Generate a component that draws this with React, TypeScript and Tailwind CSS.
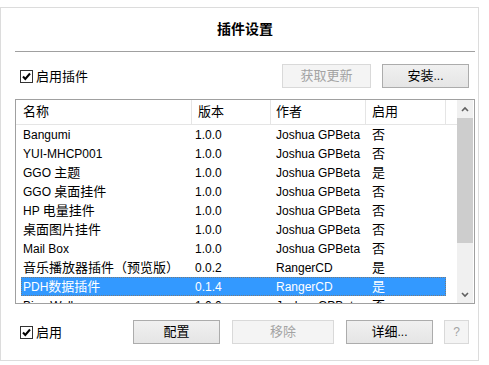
import React from 'react';

const font = { fontFamily: '"Liberation Sans", "Noto Sans CJK SC", sans-serif' };

type Row = { name: string; ver: string; author: string; on: string };

const rows: Row[] = [
  { name: 'Bangumi', ver: '1.0.0', author: 'Joshua GPBeta', on: '否' },
  { name: 'YUI-MHCP001', ver: '1.0.0', author: 'Joshua GPBeta', on: '否' },
  { name: 'GGO 主题', ver: '1.0.0', author: 'Joshua GPBeta', on: '是' },
  { name: 'GGO 桌面挂件', ver: '1.0.0', author: 'Joshua GPBeta', on: '否' },
  { name: 'HP 电量挂件', ver: '1.0.0', author: 'Joshua GPBeta', on: '否' },
  { name: '桌面图片挂件', ver: '1.0.0', author: 'Joshua GPBeta', on: '否' },
  { name: 'Mail Box', ver: '1.0.0', author: 'Joshua GPBeta', on: '否' },
  { name: '音乐播放器插件（预览版）', ver: '0.0.2', author: 'RangerCD', on: '是' },
  { name: 'PDH数据插件', ver: '0.1.4', author: 'RangerCD', on: '是' },
  { name: 'Bing Wallpaper', ver: '1.0.0', author: 'Joshua GPBeta', on: '否' },
];

const SELECTED = 8;

// CJK runs are drawn a bit larger, like YaHei next to Segoe UI
const T = ({ s }: { s: string }) => (
  <>
    {s.split(/([\u3000-\u9fff\uff00-\uffef]+)/).map((part, i) =>
      i % 2 === 1 ? (
        <span key={i} className="text-[13px]">
          {part}
        </span>
      ) : (
        <span key={i}>{part}</span>
      )
    )}
  </>
);

const CheckBox = ({ label }: { label: string }) => (
  <div className="flex items-center gap-[3px] shrink-0 whitespace-nowrap">
    <div className="w-[13px] h-[13px] border border-[#333333] bg-white flex items-center justify-center">
      <svg width="11" height="11" viewBox="0 0 11 11">
        <path d="M2 5.5 L4.3 8 L9 2.5" fill="none" stroke="#000" strokeWidth="2" />
      </svg>
    </div>
    <span className="text-[13px] text-black leading-none">{label}</span>
  </div>
);

const Button = ({ label, w, disabled }: { label: string; w: string; disabled?: boolean }) => (
  <div
    className={
      disabled
        ? `${w} h-[24px] shrink-0 border border-[#d9d9d9] bg-[#f4f4f4] text-[#a3a3a3] flex items-center justify-center text-[12px]`
        : `${w} h-[24px] shrink-0 border border-[#acacac] bg-gradient-to-b from-[#f0f0f0] to-[#e5e5e5] text-black flex items-center justify-center text-[12px]`
    }
  >
    <T s={label} />
  </div>
);

const Chevron = ({ up }: { up?: boolean }) => (
  <svg width="8" height="6" viewBox="0 0 8 6">
    <path d={up ? 'M1 5 L4 2 L7 5' : 'M1 1 L4 4 L7 1'} fill="none" stroke="#606060" strokeWidth="1.6" />
  </svg>
);

export default function App() {
  return (
    <div className="w-[489px] h-[365px] bg-white pt-[7px]" style={font}>
      <div className="w-[479px] h-[354px] border border-[#dcdcdc] bg-white pl-[14px] pr-[3px] flex flex-col">
        {/* title */}
        <div className="h-[43px] flex items-center justify-center">
          <span className="text-[14px] font-bold text-black">插件设置</span>
        </div>
        <div className="border-t border-[#a0a0a0]" />

        {/* top row */}
        <div className="mt-[12px] h-[24px] flex items-center pl-[5px] pr-[6px]">
          <CheckBox label="启用插件" />
          <div className="ml-auto flex gap-[11px]">
            <Button label="获取更新" w="w-[89px]" disabled />
            <Button label="安装..." w="w-[87px]" />
          </div>
        </div>

        {/* list */}
        <div className="mt-[11px] h-[205px] border border-[#a0a0a0] flex">
          <div className="flex-1 flex flex-col overflow-hidden">
            <div className="h-[25px] shrink-0 border-b border-[#e5e5e5] flex text-[13px] text-black">
              <div className="w-[176px] border-r border-[#e5e5e5] pl-[7px] flex items-center">名称</div>
              <div className="w-[79px] border-r border-[#e5e5e5] pl-[6px] flex items-center">版本</div>
              <div className="w-[95px] border-r border-[#e5e5e5] pl-[5px] flex items-center">作者</div>
              <div className="w-[80px] border-r border-[#e5e5e5] pl-[6px] flex items-center">启用</div>
            </div>
            <div className="flex flex-col">
              {rows.map((r, i) => (
                <div
                  key={r.name}
                  className={
                    i === SELECTED
                      ? 'ml-[5px] w-[425px] h-[19px] shrink-0 flex items-center text-[12px] text-white bg-[#3399ff] outline-1 outline-dotted outline-[#7a7a7a] -outline-offset-1'
                      : 'ml-[5px] w-[425px] h-[19px] shrink-0 flex items-center text-[12px] text-black'
                  }
                >
                  <div className="w-[174px] pl-[2px] whitespace-nowrap">
                    <T s={r.name} />
                  </div>
                  <div className="w-[81px]">{r.ver}</div>
                  <div className="w-[96px]">{r.author}</div>
                  <div className="text-[13px]">{r.on}</div>
                </div>
              ))}
            </div>
          </div>
          {/* scrollbar */}
          <div className="w-[16px] mr-[1px] bg-[#f0f0f0] flex flex-col">
            <div className="h-[18px] flex items-center justify-center">
              <Chevron up />
            </div>
            <div className="h-[125px] bg-[#cdcdcd]" />
            <div className="flex-1" />
            <div className="h-[16px] flex items-center justify-center">
              <Chevron />
            </div>
          </div>
        </div>

        {/* bottom row */}
        <div className="mt-[16px] h-[24px] flex items-center pl-[5px] pr-[6px]">
          <CheckBox label="启用" />
          <div className="ml-auto flex">
            <Button label="配置" w="w-[87px]" />
            <div className="ml-[12px]">
              <Button label="移除" w="w-[102px]" disabled />
            </div>
            <div className="ml-[12px]">
              <Button label="详细..." w="w-[87px]" />
            </div>
            <div className="ml-[11px]">
              <Button label="?" w="w-[25px]" disabled />
            </div>
          </div>
        </div>
      </div>
    </div>
  );
}
